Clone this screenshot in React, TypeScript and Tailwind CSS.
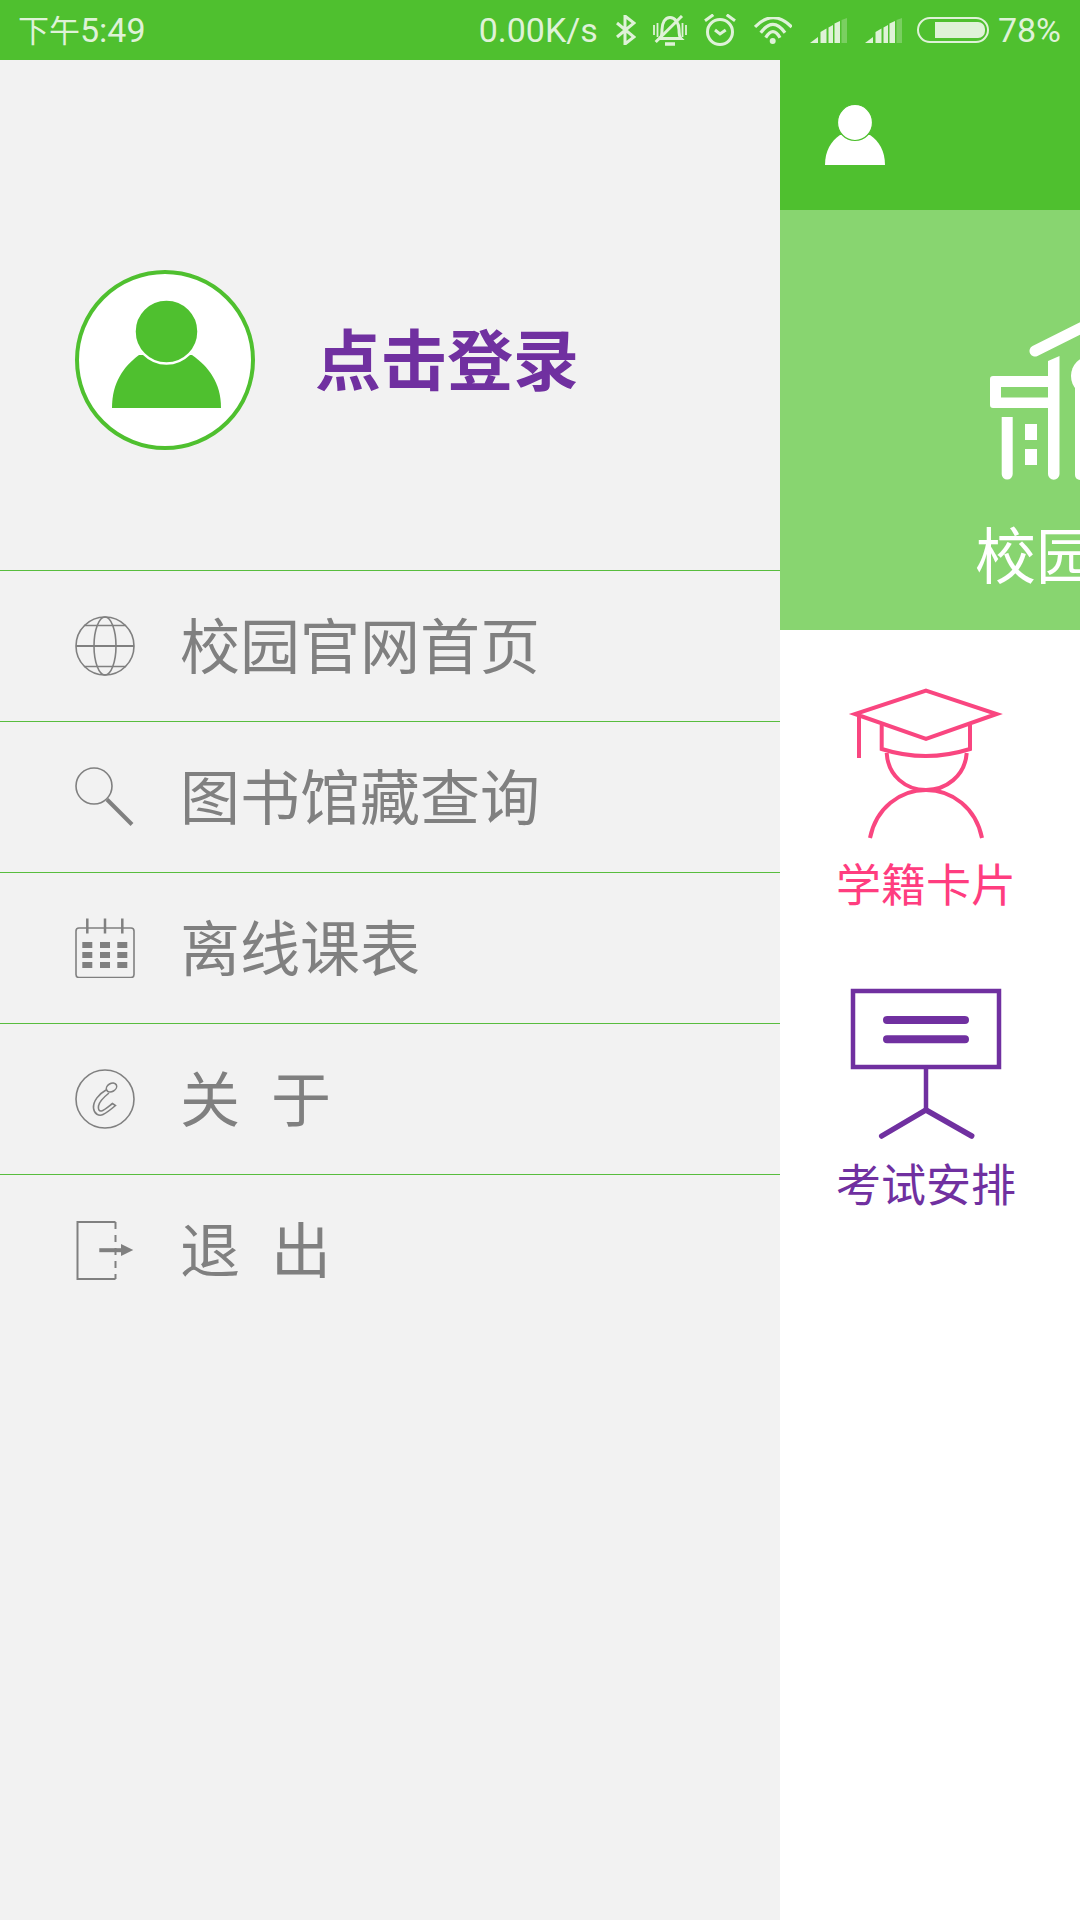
const menuItems = [
  { label: "校园官网首页", icon: <GlobeIcon /> },
  { label: "图书馆藏查询", icon: <SearchIcon /> },
  { label: "离线课表", icon: <CalendarIcon /> },
  { label: "关  于", icon: <AboutIcon /> },
  { label: "退  出", icon: <ExitIcon /> },
]

function GlobeIcon() {
  return (
    <svg width="60" height="60" viewBox="0 0 60 60" fill="none" stroke="#808080" strokeWidth="1.6">
      <circle cx="30" cy="30" r="29" />
      <ellipse cx="30" cy="30" rx="11" ry="29" />
      <path d="M1 30h58" strokeWidth="2.2" />
      <path d="M9 9.500h42M9 50.500h42" />
    </svg>
  )
}

function SearchIcon() {
  return (
    <svg width="60" height="60" viewBox="0 0 60 60" fill="none" stroke="#808080" strokeWidth="1.6">
      <circle cx="19" cy="19" r="18" />
      <path d="M32 32.500 57 57.500" strokeWidth="4" />
    </svg>
  )
}

function CalendarIcon() {
  const xs = [7.300, 25, 42.300]
  const ys = [24, 34, 44]
  return (
    <svg width="60" height="60" viewBox="0 0 60 60" fill="none" stroke="#808080" strokeWidth="1.6">
      <rect x="1" y="10" width="58" height="49.500" rx="3" />
      <path d="M12.300 0.500v15M30 0.500v15M47.300 0.500v15" strokeWidth="2.500" />
      {ys.map((y) =>
        xs.map((x) => <rect key={`${x}-${y}`} x={x} y={y} width="10" height="6" fill="#808080" stroke="none" />),
      )}
    </svg>
  )
}

function AboutIcon() {
  return (
    <svg width="60" height="60" viewBox="0 0 60 60" fill="none" stroke="#808080" strokeWidth="1.600">
      <circle cx="30" cy="30" r="29" />
      <path d="M31 21C24 25 18 32 18.500 39C19 45 24 47.500 28 45.500C32 43.500 37 39.500 40.500 36.500L37.500 34.500C33 38 29 41.500 26.500 42C24 42.500 23 40 23.500 37C24 33 29 28 34 24" />
      <ellipse cx="36.500" cy="18.500" rx="5.500" ry="4" transform="rotate(-30 36.500 18.500)" />
    </svg>
  )
}

function ExitIcon() {
  return (
    <svg width="60" height="60" viewBox="0 0 60 60" fill="none" stroke="#808080" strokeWidth="2">
      <path d="M40.500 2H2.500v57H40.500" />
      <path d="M40.500 2v57" strokeDasharray="7 6" />
      <path d="M24.300 30.200H47" strokeWidth="4" />
      <path d="M46 24l12.300 6-12.300 6z" fill="#808080" stroke="none" />
    </svg>
  )
}

function SignalIcon() {
  return (
    <svg width="37" height="25" viewBox="0 0 37 25" fill="#dff2d8">
      <path d="M0 25 8 19v6z" />
      <path d="M10.500 25V14l6-3.500V25z" />
      <path d="M18.500 25V9.500L23 7v18z" />
      <path d="M24.500 25V5.500L30 3v22z" />
      <path d="M31.500 25V2L37 0v25z" opacity="0.3" />
    </svg>
  )
}

function StatusBar() {
  return (
    <div className="flex h-[60px] items-center justify-between bg-[#4fc02f] pl-[18px] pr-[19px] font-['Roboto','Noto_Sans_CJK_SC',sans-serif] text-[34px] font-normal text-[#dff2d8]">
      <div className="flex items-baseline">
        <span className="text-[31px]">下午</span>
        <span>5:49</span>
      </div>
      <div className="flex items-center">
        <span>0.00K/s</span>
        <svg className="ml-[18px]" width="20" height="30" viewBox="0 0 20 30" fill="none" stroke="#dff2d8" strokeWidth="3">
          <path d="M1 8l17 14-9 7V1l9 7L1 22" />
        </svg>
        <svg className="ml-[17px]" width="34" height="31" viewBox="0 0 34 31" fill="none" stroke="#dff2d8" strokeWidth="3">
          <path d="M7 23.500c2-2 2-5 2-9C9 8 12 2.500 17 2.500S26 8 26 14.500c0 4 0 7 2 9z" />
          <path d="M12 29h10" strokeWidth="3.500" />
          <path d="M2.700 27 29 1" />
          <path d="M1 10v10M4.500 8v14M29.500 8v14M33 10v10" strokeWidth="1.800" />
        </svg>
        <svg className="ml-[17px]" width="32" height="32" viewBox="0 0 32 32" fill="none" stroke="#dff2d8" strokeWidth="3">
          <circle cx="16" cy="18" r="12.500" />
          <path d="M11 16l5 4 5.700-4" />
          <path d="M1 6.700 9.300 0.700M31 6.700 22.700 0.700" />
        </svg>
        <svg className="ml-[18px]" width="38" height="27" viewBox="0 0 38 27" fill="none" stroke="#dff2d8" strokeWidth="3.200">
          <path d="M1 10Q19-8.600 37.700 10" />
          <path d="M6.700 15.700Q19-1 31 15.700" />
          <path d="M11.700 20.700Q19 8.700 26 20.700" />
          <circle cx="18.700" cy="24" r="3" fill="#dff2d8" stroke="none" />
        </svg>
        <div className="ml-[18px]">
          <SignalIcon />
        </div>
        <div className="ml-[18px]">
          <SignalIcon />
        </div>
        <div className="ml-[15px] flex h-[26px] w-[72px] items-center justify-end rounded-[13px] border-2 border-[#dff2d8] pr-[2px]">
          <div className="h-[16px] w-[50px] rounded-r-[7px] bg-[#dff2d8]" />
        </div>
        <span className="ml-[9px]">78%</span>
      </div>
    </div>
  )
}

function Drawer() {
  return (
    <div className="flex w-[780px] shrink-0 flex-col bg-[#f2f2f2]">
      <div className="flex h-[510px] items-start pl-[75px] pt-[210px]">
        <svg width="180" height="180" viewBox="0 0 180 180">
          <circle cx="90" cy="90" r="88" fill="#fff" stroke="#4fc02f" strokeWidth="4" />
          <path d="M37 138c0-25 11-41 27-53h53c17 12 29 28 29 53z" fill="#4fc02f" />
          <circle cx="91.500" cy="61.500" r="32" fill="#4fc02f" stroke="#fff" strokeWidth="2.500" />
        </svg>
        <span className="ml-[60px] mt-[50px] text-[66px] font-bold leading-[72px] text-[#7030a0]">点击登录</span>
      </div>
      {menuItems.map((item) => (
        <div key={item.label} className="flex h-[151px] items-center border-t border-[#58bd3e] pl-[75px]">
          {item.icon}
          <span className="mb-[6px] ml-[45px] whitespace-pre text-[60px] leading-[80px] text-[#808080] [word-spacing:2px]">{item.label}</span>
        </div>
      ))}
    </div>
  )
}

function MainPanel() {
  return (
    <div className="flex w-[300px] shrink-0 flex-col overflow-hidden bg-white">
      <div className="flex h-[150px] items-start bg-[#4fc02f] pl-[45px] pt-[45px]">
        <svg width="60" height="60" viewBox="0 0 60 60" fill="#fff">
          <path d="M0 60c0-14 6-24 15-30h30c9 6 15 16 15 30z" />
          <ellipse cx="30" cy="17.500" rx="17.500" ry="18" stroke="#4fc02f" strokeWidth="1.200" />
        </svg>
      </div>
      <div className="h-[420px] overflow-hidden bg-[#88d570] pl-[197px] pt-[90px]">
        <svg className="ml-[13px]" width="90" height="190" viewBox="990 300 90 190" fill="#fff">
          <path d="M1035 351 1085 326" stroke="#fff" strokeWidth="11" strokeLinecap="round" fill="none" />
          <path d="M990 379a3 3 0 0 1 3-3h55v-15l11.500-5v118a5.750 5.750 0 0 1-11.500 0v-66h-55a3 3 0 0 1-3-3zM1001 387v10.500h47V387z" fillRule="evenodd" />
          <path d="M1001.700 417h11v57a5.500 5.500 0 0 1-11 0z" />
          <path d="M1025 424h12v16h-12zM1025 449h12v16h-12z" />
          <circle cx="1091" cy="376" r="20" />
          <rect x="1075" y="373" width="20" height="107" rx="5" />
        </svg>
        <div className="-ml-[2px] mt-[28px] w-max text-[61px] leading-[70px] text-white">校园</div>
      </div>
      <div className="flex w-[292px] flex-col items-center pt-[50px]">
        <svg width="160" height="160" viewBox="846 680 160 160" fill="none" stroke="#f94680" strokeWidth="4">
          <path d="M926 690.700 996.700 714 926 739 855 714z" strokeLinejoin="miter" />
          <path d="M859 715v43" />
          <path d="M881.700 725v24q44 14 88.300 0v-24" />
          <path d="M886.700 753C888 776 906 790 926 790s39-14 40.700-37" />
          <path d="M870 838c6-30 30-48 56-48s50 18 56 48" />
        </svg>
        <span className="mb-[1px] mt-[15px] text-[45px] leading-[56px] text-[#ff3d7f]">学籍卡片</span>
        <svg className="mt-[68px]" width="160" height="160" viewBox="846 980 160 160" fill="none" stroke="#7030a0" strokeWidth="4.500">
          <rect x="853" y="991" width="146" height="76" />
          <path d="M887 1020h78M887 1039.300h78" strokeWidth="8" strokeLinecap="round" />
          <path d="M926 1069v41" />
          <path d="M881.700 1136 926 1110l45.700 26" strokeWidth="5.500" strokeLinecap="round" />
        </svg>
        <span className="mt-[15px] text-[45px] leading-[56px] text-[#7030a0]">考试安排</span>
      </div>
    </div>
  )
}

export default function App() {
  return (
    <div className="flex h-[1920px] w-[1080px] flex-col overflow-hidden font-['Noto_Sans_CJK_SC',sans-serif]">
      <StatusBar />
      <div className="flex flex-1">
        <Drawer />
        <MainPanel />
      </div>
    </div>
  )
}
